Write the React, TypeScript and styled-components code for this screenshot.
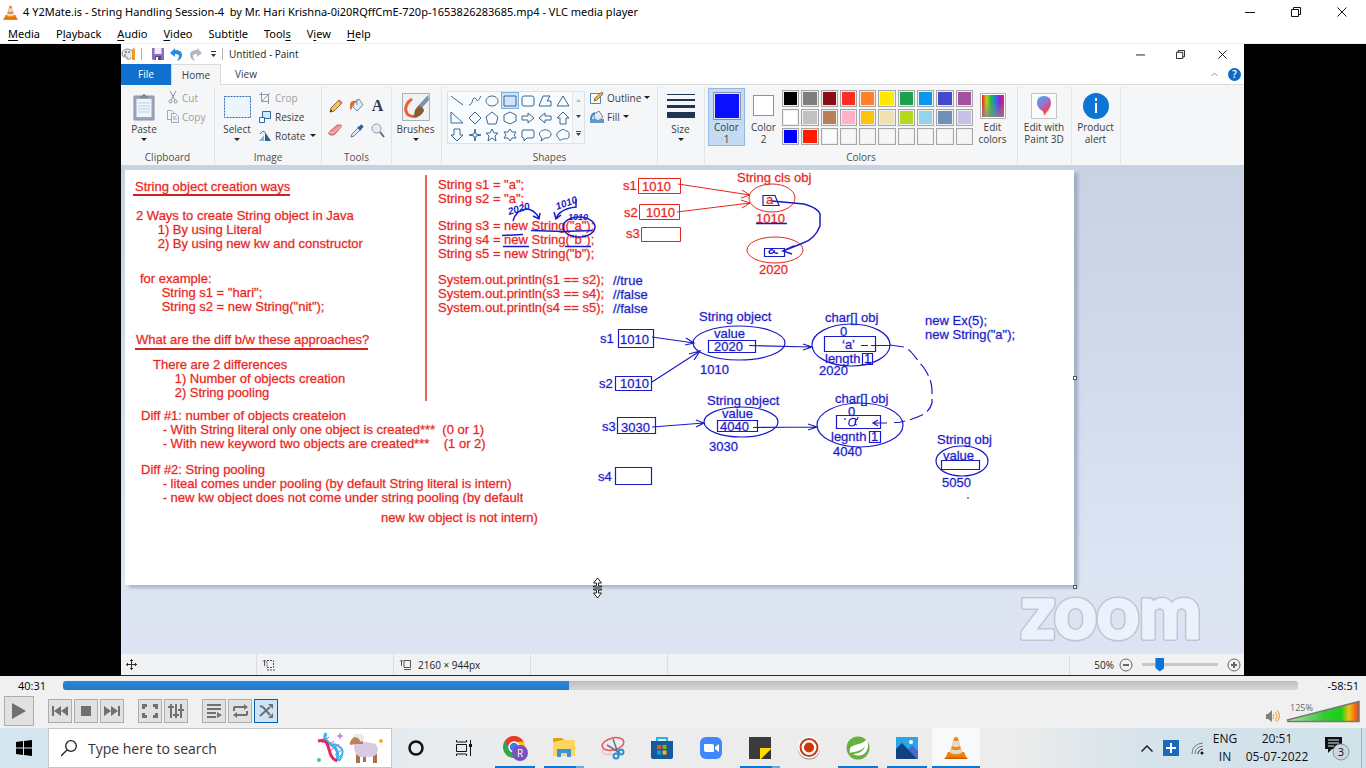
import React from "react";
import styled, { createGlobalStyle, css } from "styled-components";

const ui = '"Open Sans", "Noto Sans", sans-serif';
const RED = "#e8251c";
const BLUE = "#1a1ac8";

const GlobalStyle = createGlobalStyle`
  * { box-sizing: border-box; }
  body { margin: 0; font-family: ${ui}; background: #000; }
  button { font-family: inherit; padding: 0; margin: 0; border: 0; background: none; color: inherit; }
  svg { display: block; flex: none; }
`;

/* ---------- VLC window ---------- */

const Desktop = styled.div`
  display: flex;
  flex-direction: column;
  min-height: 100vh;
`;
const TitleBar = styled.header`
  display: flex;
  align-items: center;
  height: 24px;
  padding-left: 3px;
  background: #fff;
`;
const WindowTitle = styled.h1`
  flex: 1;
  margin: 0 0 0 5px;
  font: 400 11px/24px "Noto Sans", sans-serif;
  color: #000;
  white-space: pre;
`;
const WindowButton = styled.button<{ $w: number }>`
  display: flex;
  align-items: center;
  justify-content: center;
  width: ${(p) => p.$w}px;
  height: 20px;
`;
const MenuBar = styled.nav`
  display: flex;
  gap: 16px;
  height: 20px;
  padding-left: 8px;
  background: #fff;
  border-bottom: 1px solid #f0f0f0;
`;
const MenuButton = styled.button`
  font: 11px/20px "Noto Sans", sans-serif;
  color: #000;
  u { text-underline-offset: 2px; }
`;
const VideoArea = styled.main`
  flex: 1;
  display: grid;
  grid-template-columns: 121px minmax(0, 1fr) 122px;
  background: #000;
`;
const PlayerBar = styled.section`
  height: 52px;
  background: #f0f0f0;
  color: #000;
`;
const SeekRow = styled.div`
  display: flex;
  align-items: center;
  height: 19px;
  gap: 17px;
  padding: 0 7px 0 18px;
  font-size: 11px;
`;
const SeekSlider = styled.input<{ $done: number }>`
  appearance: none;
  flex: 1;
  min-width: 0;
  height: 9px;
  margin: 0 12px 0 0;
  border-radius: 3px;
  background: linear-gradient(#2a86d8, #2478c8) left / ${(p) => p.$done}% 100% no-repeat,
    linear-gradient(#bcbcbc, #d8d8d8);
  &::-webkit-slider-thumb { appearance: none; width: 1px; height: 1px; }
`;
const ControlRow = styled.div`
  display: flex;
  align-items: center;
  height: 32px;
  padding: 0 6px 0 4px;
`;
const ControlGroup = styled.div`
  display: flex;
  gap: 2px;
  margin-right: 14px;
`;
const ControlButton = styled.button<{ $big?: boolean; $on?: boolean }>`
  display: flex;
  align-items: center;
  justify-content: center;
  width: ${(p) => (p.$big ? 30 : 24)}px;
  height: ${(p) => (p.$big ? 30 : 24)}px;
  border: 1px solid ${(p) => (p.$on ? "#0a5ca8" : "#adadad")};
  background: ${(p) => (p.$on ? "#cce4f7" : "#e1e1e1")};
`;
const Volume = styled.div`
  display: flex;
  align-items: flex-end;
  margin-left: auto;
  gap: 6px;
`;

/* ---------- Paint window ---------- */

const Paint = styled.section`
  display: flex;
  flex-direction: column;
  min-width: 0;
  overflow: hidden;
  background: #fff;
  color: #3c3c3c;
  font-size: 10px;
  border-bottom: 1px solid #2b2a2c;
`;
const PaintTitle = styled.header`
  display: flex;
  align-items: center;
  height: 20px;
`;
const PaintName = styled.span`
  flex: 1;
  margin-left: 6px;
  font-size: 10px;
  color: #222;
`;
const Divider = styled.i`
  width: 1px;
  height: 12px;
  background: #b0b0b0;
`;
const QuickTools = styled.div`
  display: flex;
  align-items: center;
  padding-left: 6px;
`;
const QuickButton = styled.button<{ $w?: number }>`
  display: flex;
  align-items: center;
  justify-content: center;
  width: ${(p) => p.$w ?? 19}px;
`;
const TabRow = styled.div`
  display: flex;
  align-items: center;
  height: 21px;
  border-bottom: 1px solid #dcdcdc;
`;
const Tab = styled.button<{ $kind?: "file" | "active" }>`
  width: 50px;
  height: 21px;
  font-size: 10px;
  line-height: 20px;
  ${(p) => p.$kind === "file" && css`color: #fff; background: #1070d0;`}
  ${(p) => p.$kind === "active" && css`background: #f5f6f7; border: 1px solid #dcdcdc; border-bottom: 0;`}
`;
const TabTools = styled.div`
  display: flex;
  align-items: center;
  gap: 10px;
  margin-left: auto;
  padding-right: 3px;
`;
const HelpButton = styled.button`
  width: 13px;
  height: 13px;
  border-radius: 50%;
  background: #0b6bc7;
  color: #fff;
  font-size: 10px;
  line-height: 13px;
  font-weight: 600;
`;
const Ribbon = styled.div`
  display: flex;
  height: 80px;
  background: #f5f6f7;
`;
const Group = styled.section<{ $w: number }>`
  display: flex;
  flex-direction: column;
  justify-content: space-between;
  width: ${(p) => p.$w}px;
  margin: 2px 0 1px;
  padding-bottom: 0;
  border-right: 1px solid #e2e3e5;
`;
const GroupBody = styled.div<{ $gap?: number; $pad?: number }>`
  display: flex;
  gap: ${(p) => p.$gap ?? 0}px;
  padding-left: ${(p) => p.$pad ?? 0}px;
`;
const GroupName = styled.h2`
  margin: 0;
  font-size: 10px;
  line-height: 14px;
  font-weight: 400;
  text-align: center;
  color: #505050;
`;
const BigButton = styled.button<{ $w: number; $on?: boolean }>`
  display: flex;
  flex-direction: column;
  align-items: center;
  width: ${(p) => p.$w}px;
  height: 58px;
  margin-top: 1px;
  padding-top: 2px;
  font-size: 10px;
  line-height: 12px;
  border: 1px solid ${(p) => (p.$on ? "#8fb8e4" : "transparent")};
  background: ${(p) => (p.$on ? "#c5daf3" : "transparent")};
  white-space: pre;
`;
const IconBox = styled.span`
  display: flex;
  align-items: center;
  justify-content: center;
  height: 31px;
  margin-bottom: 1px;
`;
const Caret = styled.i`
  width: 0;
  margin: 3px 2px 0;
  border: 3px solid transparent;
  border-top: 3px solid #222;
  border-bottom: 0;
`;
const SmallStack = styled.div`
  display: flex;
  flex-direction: column;
  padding-top: 1px;
`;
const SmallButton = styled.button<{ $off?: boolean; $gap?: number }>`
  display: flex;
  align-items: center;
  gap: ${(p) => p.$gap ?? 3}px;
  height: 19px;
  font-size: 10px;
  color: ${(p) => (p.$off ? "#a0a0a0" : "#3c3c3c")};
  ${Caret} { margin: 0; }
`;
const ToolGrid = styled.div`
  display: grid;
  grid-template-columns: repeat(3, 21px);
  grid-auto-rows: 25px;
  padding: 6px 0 0 3px;
`;
const ToolButton = styled.button`
  display: flex;
  align-items: center;
  justify-content: center;
`;
const TextTool = styled(ToolButton)`
  font: 700 16px/16px "Liberation Serif", serif;
  color: #2e3a50;
`;
const Gallery = styled.div`
  display: flex;
  height: 53px;
  margin-top: 4px;
  border: 1px solid #dbe3ea;
  background: #f8fcff;
`;
const ShapeGrid = styled.div`
  display: grid;
  width: 124px;
  grid-template-columns: repeat(7, 1fr);
  grid-auto-rows: 17px;
`;
const ShapeButton = styled.button<{ $on?: boolean }>`
  display: flex;
  align-items: center;
  justify-content: center;
  border: 1px solid ${(p) => (p.$on ? "#7fb0e0" : "transparent")};
  background: ${(p) => (p.$on ? "#cfe4fa" : "transparent")};
`;
const GalleryScroll = styled.div`
  display: flex;
  flex-direction: column;
  align-items: center;
  justify-content: space-around;
  width: 12px;
  border-left: 1px solid #e2e6ea;
  background: #f5f6f7;
`;
const ColorWell = styled.i<{ $c: string; $big?: boolean }>`
  width: ${(p) => (p.$big ? 28 : 21)}px;
  height: ${(p) => (p.$big ? 28 : 21)}px;
  border: 1px solid #8f9398;
  outline: ${(p) => (p.$big ? "1px solid #dfe9f5" : "0")};
  outline-offset: -2px;
  background: ${(p) => p.$c};
`;
const Palette = styled.div`
  display: grid;
  width: 191px;
  grid-template-columns: repeat(10, 1fr);
  grid-auto-rows: 17px;
  gap: 2px;
  padding: 3px 0 0;
`;
const Swatch = styled.button<{ $c: string }>`
  border: 1px solid #a6a6a6;
  box-shadow: inset 0 0 0 1px #eee;
  background: ${(p) => p.$c};
`;
const Workspace = styled.div`
  position: relative;
  flex: 1;
  padding: 5px 0 0 4px;
  background: linear-gradient(#c8d2e2, #ccd6e8 20%, #dce5f3 85%, #dde3f2);
`;
const Canvas = styled.div`
  position: relative;
  width: 949px;
  height: 415px;
  background: #fff;
  box-shadow: 4px 3px 3px rgba(125, 142, 168, 0.55);
`;
const Note = styled.p<{ $x: number; $y: number; $blue?: boolean; $clip?: boolean }>`
  position: absolute;
  left: ${(p) => p.$x}px;
  top: ${(p) => p.$y}px;
  margin: 0;
  font: 13px/14px "Liberation Sans", Arial, sans-serif;
  color: ${(p) => (p.$blue ? BLUE : RED)};
  -webkit-text-stroke: 1px ${(p) => (p.$blue ? "rgba(26, 26, 200, 0.25)" : "rgba(232, 37, 28, 0.25)")};
  white-space: pre;
  ${(p) => p.$clip && css`height: 41px; overflow: hidden;`}
`;
const Sketch = styled.svg`
  position: absolute;
  left: 0;
  top: 0;
  font: 13px "Liberation Sans", Arial, sans-serif;
`;
const Handle = styled.i<{ $x: number; $y: number }>`
  position: absolute;
  left: ${(p) => p.$x}px;
  top: ${(p) => p.$y}px;
  width: 4px;
  height: 4px;
  border: 1px solid #4c5866;
  background: #fff;
`;
const Pointer = styled.svg`
  position: absolute;
  left: 471px;
  top: 412px;
`;
const Watermark = styled.svg`
  position: absolute;
  right: 40px;
  bottom: 6px;
`;
const StatusBar = styled.footer`
  display: flex;
  height: 22px;
  border-top: 1px solid #e3e5ea;
  background: #f1f2f4;
`;
const StatusCell = styled.div<{ $w?: number }>`
  display: flex;
  align-items: center;
  gap: 5px;
  ${(p) => (p.$w ? css`width: ${p.$w}px;` : css`flex: 1;`)}
  padding-left: 5px;
  border-right: 1px solid #dcdee2;
  font-size: 10px;
  color: #222;
`;
const ZoomCell = styled.div`
  display: flex;
  align-items: center;
  gap: 5px;
  padding: 0 3px 0 24px;
  font-size: 10px;
  color: #222;
`;
const RoundButton = styled.button`
  display: flex;
`;
const ZoomSlider = styled.input`
  appearance: none;
  width: 76px;
  height: 16px;
  margin: 0 4px;
  background: linear-gradient(#c8c8c8, #c8c8c8) center / 100% 3px no-repeat;
  &::-webkit-slider-thumb {
    appearance: none;
    width: 9px;
    height: 14px;
    background: #0b74d8;
    clip-path: polygon(0 0, 100% 0, 100% 75%, 50% 100%, 0 75%);
  }
`;

/* ---------- Taskbar ---------- */

const Taskbar = styled.footer`
  display: flex;
  height: 40px;
  color: #111;
  background: linear-gradient(90deg, #d3e5ee, #e6ebee 30%, #ececec 40%, #ececec 74%, #d6e3ea 84%, #d0e2ea);
`;
const TaskButton = styled.button<{ $bar?: "full" | "multi"; $active?: boolean; $gap?: number }>`
  position: relative;
  display: flex;
  align-items: center;
  justify-content: center;
  width: 48px;
  height: 40px;
  margin-left: ${(p) => p.$gap ?? 0}px;
  background: ${(p) => (p.$active ? "#f8f9fa" : "transparent")};
  &::after {
    content: "";
    position: absolute;
    bottom: 0;
    left: ${(p) => (p.$active ? 0 : 4)}px;
    right: ${(p) => (p.$active ? 0 : 4)}px;
    height: 2px;
    background: ${(p) =>
      p.$bar === "full" ? "#0b78d6" : p.$bar === "multi" ? "linear-gradient(90deg, #0b78d6 80%, #66abe4 80%)" : "none"};
  }
`;
const SearchBox = styled.label`
  display: flex;
  align-items: center;
  width: 344px;
  height: 40px;
  padding: 0 7px 0 12px;
  border: 1px solid #c3c7ca;
  background: #fff;
`;
const SearchInput = styled.input`
  flex: 1;
  min-width: 0;
  margin-left: 11px;
  padding: 0;
  border: 0;
  outline: 0;
  font: 14px ${ui};
  color: #333;
  background: none;
  &::placeholder { color: #333; opacity: 1; }
`;
const Tray = styled.div`
  display: flex;
  align-items: center;
  margin-left: auto;
  padding-right: 4px;
`;
const TrayButton = styled.button<{ $w: number }>`
  display: flex;
  align-items: center;
  justify-content: center;
  width: ${(p) => p.$w}px;
  height: 40px;
  font-size: 12px;
  line-height: 18px;
  text-align: center;
`;
const TrayEdge = styled.i`
  width: 1px;
  height: 40px;
  background: #a8b6be;
`;

/* ---------- Icons ---------- */

const Cone = ({ size }: { size: number }) => (
  <svg width={size} height={size} viewBox="0 0 24 24">
    <path d="M4 16h16l3 7H1z" fill="#f07c00" />
    <path d="M1 21.500h22l.5 1.500H.5z" fill="#c85a00" />
    <path d="M10.300 1.500q1.700-1 3.400 0L18.500 18q-6.500 3.500-13 0z" fill="#f58a0b" />
    <path d="M9.300 5h5.400l1.400 5q-4 2-8.200 0zM7 13q5 2.500 10 0l1 3.500q-6 3-12 0z" fill="#dcdcdc" />
  </svg>
);

const WinGlyph = ({ kind, s = 10 }: { kind: "min" | "max" | "close"; s?: number }) => (
  <svg width={s} height={s} viewBox="0 0 10 10" fill="none" stroke="#111">
    {kind === "min" && <path d="M0 5.500h10" />}
    {kind === "max" && <path d="M.5 2.500h7v7h-7zM2.500 2.500v-2h7v7h-2" />}
    {kind === "close" && <path d="M.5.5l9 9M9.500.5l-9 9" />}
  </svg>
);

const shapes: string[] = [
  "M1 2l12 9",
  "M1 11C5 11 4 3 7 4S8 11 13 2",
  "M7 2a6 5 0 1 0 .1 0z",
  "M1 2h12v10H1z",
  "M3 2h8q2 0 2 2v6q0 2-2 2H3q-2 0-2-2V4q0-2 2-2z",
  "M1 12L5 2h7L9 7h4v5z",
  "M7 2l6 10H1z",
  "M1 1v11h12z",
  "M7 1l6 6-6 6-6-6z",
  "M7 1l6 5-2 7H3L1 6z",
  "M7 1l6 3v6l-6 3-6-3V4z",
  "M1 5h6V2l6 5-6 5V9H1z",
  "M13 5H7V2L1 7l6 5V9h6z",
  "M7 1l6 6h-3v6H4V7H1z",
  "M7 13L1 7h3V1h6v6h3z",
  "M7 1l1 5 5 1-5 1-1 5-1-5-5-1 5-1z",
  "M7 1l2 4h4l-3 3 1 5-4-3-4 3 1-5-3-3h4z",
  "M7 1l2 3h4l-2 3 2 3H9l-2 3-2-3H1l2-3-2-3h4z",
  "M2 2h10l1 1v6l-1 1H6l-3 3v-3H2L1 9V3z",
  "M4 10C-3 4 6 1 9 2c7 2 4 9-2 8l-4 3z",
  "M3 10C-1 8 1 4 4 3c3-3 5-1 6 0 4 0 3 4 3 6-1 3-4 1-6 2-2 2-5 1-4-1z",
];

const palette = [
  "#000", "#7f7f7f", "#880f15", "#fb2d24", "#ff8326", "#ffe900", "#1ba050", "#0798ee", "#4549cd", "#a6519f",
  "#fff", "#c1c1c1", "#bb7c58", "#ffb0ca", "#ffc20d", "#efe2ac", "#b6d81c", "#93d4e8", "#7090b8", "#c9c1e3",
  "#00f", "#ff1a00", "#fbfcfd", "#f6f6f6", "#f6f6f6", "#f6f6f6", "#f6f6f6", "#f6f6f6", "#f6f6f6", "#f6f6f6",
];

const Pencil = () => (
  <svg width="14" height="14" viewBox="0 0 14 14">
    <path d="M1 13l1-4 8-8 3 3-8 8z" fill="#f3c35c" stroke="#8a6d3b" />
    <path d="M9 2l3 3 1.500-1.500-3-3z" fill="#d07060" />
    <path d="M1 13l.6-2.500L3.500 12z" fill="#333" />
  </svg>
);
const Bucket = () => (
  <svg width="15" height="15" viewBox="0 0 15 15">
    <path d="M5 5l5-4 4 6-6 6-4-4z" fill="#e2eef6" stroke="#6f8fa8" />
    <path d="M8 7V1" stroke="#6f8fa8" />
    <path d="M8 3C4 2 1 3 1 7v5c2 0 2-3 3-5z" fill="#df6b2f" />
  </svg>
);
const Eraser = () => (
  <svg width="15" height="13" viewBox="0 0 15 13">
    <path d="M1 8l7-6q1-1 2-1h3q1 1 0 2L7 10q-1 1-2 1H2q-2-1-1-3z" fill="#ee8f93" stroke="#c9686e" />
    <path d="M1 8l4 .5L13 2" fill="none" stroke="#f9c4c4" />
  </svg>
);
const Dropper = () => (
  <svg width="14" height="14" viewBox="0 0 14 14">
    <path d="M1 13l1-3 6-6 2 2-6 6z" fill="#dfe9f2" stroke="#6c7f94" />
    <path d="M7 3l2-.5 2-2q2 0 2.500 2.500l-2 2-.5 2z" fill="#2b5f9e" />
  </svg>
);
const Magnifier = () => (
  <svg width="14" height="15" viewBox="0 0 14 15" fill="none">
    <circle cx="5.500" cy="5.500" r="4.500" fill="#e3edf5" stroke="#8d99a5" />
    <path d="M9 9l4 5" stroke="#7a6458" strokeWidth="2" />
  </svg>
);

/* ---------- Paint canvas drawing ---------- */

type Mark = [number, number, string];
const redMarks: Mark[] = [
  [623, 190, "s1"], [642, 191, "1010"], [624, 217, "s2"], [646, 217, "1010"], [626, 238, "s3"],
  [737, 182, "String cls obj"], [766, 204, "a"], [756, 223, "1010"], [759, 274, "2020"],
];
const blueMarks: Mark[] = [
  [600, 343, "s1"], [620, 344, "1010"], [599, 388, "s2"], [620, 388, "1010"], [602, 431, "s3"], [621, 432, "3030"],
  [598, 481, "s4"], [699, 321, "String object"], [714, 338, "value"], [714, 351, "2020"], [700, 374, "1010"],
  [825, 322, "char[] obj"], [840, 336, "0"], [842, 349, "‘a’"], [825, 363, "length"], [864, 363, "1"],
  [819, 375, "2020"], [707, 405, "String object"], [722, 418, "value"], [720, 431, "4040"], [709, 451, "3030"],
  [835, 403, "char[] obj"], [848, 416, "0"], [831, 441, "legnth"], [871, 441, "1"], [833, 456, "4040"],
  [937, 444, "String obj"], [943, 460, "value"], [942, 487, "5050"],
];

const Drawing = () => (
  <Sketch width="949" height="415" viewBox="125 170 949 415" fill="none">
    <g stroke={RED}>
      <path d="M426 175v226" stroke="#ec625b" strokeWidth="2" />
      <path d="M133 195h157M135 349h233" strokeWidth="2" stroke="#d0231c" />
      <path d="M638.500 178.500h42v15h-42zM639.500 204.500h40v15h-40zM641.500 227.500h39v14h-39z" />
      <path d="M678 184l72 11m-8-5l8 5-9 3M677 212l73-9m-9-3l9 3-8 5" />
      <ellipse cx="772" cy="198" rx="23" ry="14" />
      <ellipse cx="775" cy="250" rx="28" ry="13" />
    </g>
    <g fill={RED} stroke={RED} strokeOpacity="0.25">
      {redMarks.map(([x, y, t], i) => <text key={i} x={x} y={y}>{t}</text>)}
    </g>
    <g stroke={BLUE}>
      <path d="M763 195.500h12l4 10h-16zM764.500 248.500h20v8h-20z" strokeWidth="1.200" />
      <path d="M772 201l32 3q14 4 16 10v12q-5 13-17 17l-20 8m11-5l-11 5 9 3" strokeWidth="1.500" />
      <path d="M756 223.500h31M531 230.500l32 1 29-1M502 235.500l21-1M503 246.500h26M565 246.500h26" strokeWidth="1.500" />
      <ellipse cx="579" cy="227" rx="16" ry="10" strokeWidth="1.500" />
      <path d="M513 221q3-11 13-12 8 0 13 9m-6-2l6 3 1-6M576 199v8q-17 2-20 12m-2-7l2 7 5-4" strokeWidth="1.500" />
      <path d="M773 250q-3-1-4 2 1 3 5 0v-2q0 4 4 3" strokeWidth="1.500" />
      <g strokeWidth="1.200">
        <path d="M618.500 329.500h35v18h-35zM615.500 376.500h36v14h-36zM617.500 417.500h38v16h-38zM615.500 467.500h36v17h-36z" />
        <path d="M652 337l42 6m-8-5l8 5-9 2M652 382l48-31m-11 3l11-3-6 9M652 427l52-4m-8-3l8 3-8 4" />
        <path d="M749 345.500l63 1.500m-9-3l9 3-9 3M753 427.500l64-.5m-9-3l9 3-9 3" />
        <ellipse cx="739" cy="343" rx="46" ry="17" />
        <ellipse cx="851" cy="345" rx="39" ry="21" />
        <ellipse cx="741" cy="422" rx="37" ry="15" />
        <ellipse cx="860" cy="425" rx="43" ry="22" />
        <ellipse cx="962" cy="461" rx="26" ry="15" />
        <path d="M708.500 340.500h47v12h-47zM824.500 336.500h51v15h-51zM862.500 353.500h10v11h-10zM717.500 420.500h40v11h-40zM836.500 415.500h44v13h-44zM869.500 431.500h11v11h-11zM941.500 460.500h38v9h-38z" />
        <path d="M861 345.500h7M871 345.500h19" />
        <path d="M890 345l14 2q5 2 8 6l12 15q8 12 8 22v13q-2 8-10 12-10 5-22 7" strokeDasharray="14 5" />
        <path d="M900 422.500h-6M887 423h-14m5-3l-5 3 5 3" />
        <path d="M845 418v2M856 419q-6-2-7 3-1 4 3 4t4-7q-2 6 1 6M858 417l-1 3" />
        <path d="M967 498h2" />
      </g>
    </g>
    <g fill={BLUE}>
      <g stroke={BLUE} strokeOpacity="0.25">
        {blueMarks.map(([x, y, t], i) => <text key={i} x={x} y={y}>{t}</text>)}
      </g>
      <g fontSize="10" fontWeight="700" fontStyle="italic">
        <text transform="translate(509 215) rotate(-16)">2020</text>
        <text transform="translate(557 210) rotate(-20)">1010</text>
        <text x="568" y="220" fontSize="9">1010</text>
      </g>
    </g>
  </Sketch>
);

const notes: { x: number; y: number; text: string; blue?: boolean; clip?: boolean }[] = [
  { x: 10, y: 10, text: "String object creation ways" },
  { x: 11, y: 39, text: "2 Ways to create String object in Java\n      1) By using Literal\n      2) By using new kw and constructor" },
  { x: 15, y: 102, text: "for example:\n      String s1 = \"hari\";\n      String s2 = new String(\"nit\");" },
  { x: 11, y: 163, text: "What are the diff b/w these approaches?" },
  { x: 28, y: 188, text: "There are 2 differences\n      1) Number of objects creation\n      2) String pooling" },
  { x: 16, y: 239, text: "Diff #1: number of objects createion\n      - With String literal only one object is created***  (0 or 1)\n      - With new keyword two objects are created***    (1 or 2)" },
  { x: 16, y: 293, clip: true, text: "Diff #2: String pooling\n      - liteal comes under pooling (by default String literal is intern)\n      - new kw object does not come under string pooling (by default" },
  { x: 256, y: 341, text: "new kw object is not intern)" },
  { x: 313, y: 8, text: "String s1 = \"a\";\nString s2 = \"a\";" },
  { x: 313, y: 49, text: "String s3 = new String(\"a\");\nString s4 = new String(\"b\");\nString s5 = new String(\"b\");" },
  { x: 313, y: 103, text: "System.out.println(s1 == s2);\nSystem.out.println(s3 == s4);\nSystem.out.println(s4 == s5);" },
  { x: 488, y: 104, blue: true, text: "//true\n//false\n//false" },
  { x: 800, y: 144, blue: true, text: "new Ex(5);\nnew String(\"a\");" },
];

const PaintWindow = () => (
  <Paint>
    <PaintTitle>
      <svg width="20" height="16" viewBox="0 0 20 16">
        <path d="M1 8q0-5 6-5 6 1 5 6-1 5-6 4 1-3-2-2-3 0-3-3z" fill="#e8e8e8" stroke="#8f8f8f" />
        <circle cx="5" cy="6" r="1" fill="#d44" /><circle cx="8" cy="6" r="1" fill="#48c" /><circle cx="4" cy="9" r="1" fill="#5a5" />
        <path d="M11 14V4l2-3 1 3v10z" fill="#f09a2a" />
      </svg>
      <Divider />
      <QuickTools>
        <QuickButton aria-label="Save">
          <svg width="12" height="12" viewBox="0 0 12 12"><path d="M0 0h12v12H1L0 11z" fill="#8a6fc0" /><path d="M2.500 0h7v6h-7z" fill="#eee8f8" /><path d="M3 8h6v4H3z" fill="#574a78" /><path d="M4 9h2v3H4z" fill="#fff" /></svg>
        </QuickButton>
        <QuickButton aria-label="Undo">
          <svg width="13" height="13" viewBox="0 0 13 13"><path d="M5 0v2q7 0 7 5 0 4-5 6 2-3 2-5 0-2-4-2v3L0 5z" fill="#2c8ae0" /></svg>
        </QuickButton>
        <QuickButton aria-label="Redo">
          <svg width="13" height="13" viewBox="0 0 13 13"><path d="M8 0v2Q1 2 1 7q0 4 5 6-2-3-2-5 0-2 4-2v3l5-4z" fill="#b3b9c1" /></svg>
        </QuickButton>
        <QuickButton $w={17} aria-label="Customize toolbar">
          <svg width="7" height="6" viewBox="0 0 7 6"><path d="M1 0h5v1H1zM1 3h5L3.500 6z" fill="#333" /></svg>
        </QuickButton>
      </QuickTools>
      <Divider />
      <PaintName>Untitled - Paint</PaintName>
      <WindowButton $w={39} aria-label="Minimize"><WinGlyph kind="min" s={9} /></WindowButton>
      <WindowButton $w={41} aria-label="Restore"><WinGlyph kind="max" s={9} /></WindowButton>
      <WindowButton $w={43} aria-label="Close"><WinGlyph kind="close" s={9} /></WindowButton>
    </PaintTitle>
    <TabRow>
      <Tab $kind="file">File</Tab>
      <Tab $kind="active">Home</Tab>
      <Tab>View</Tab>
      <TabTools>
        <svg width="7" height="5" viewBox="0 0 7 5" fill="none" stroke="#999"><path d="M.5 4l3-3 3 3" /></svg>
        <HelpButton aria-label="Help">?</HelpButton>
      </TabTools>
    </TabRow>
    <Ribbon>
      <Group $w={94}>
        <GroupBody>
          <BigButton $w={46}>
            <IconBox>
              <svg width="24" height="28" viewBox="0 0 24 28"><path d="M2 3h20v24H2z" fill="#9aa8ba" stroke="#8593a6" /><path d="M4.500 6h15v18h-15z" fill="#eef4fa" /><path d="M6 10h12M6 13h12M6 16h12M6 19h12" stroke="#c2d3e2" /><path d="M8 5V3h2q2-4 4 0h2v2z" fill="#7d8793" /></svg>
            </IconBox>
            Paste<Caret />
          </BigButton>
          <SmallStack>
            <SmallButton $off>
              <svg width="12" height="13" viewBox="0 0 12 13" fill="none" stroke="#8893a0"><path d="M3 0l5 9M9 0L4 9" /><circle cx="3.500" cy="10.500" r="1.500" /><circle cx="8.500" cy="10.500" r="1.500" /></svg>Cut
            </SmallButton>
            <SmallButton $off>
              <svg width="12" height="13" viewBox="0 0 12 13" fill="#f3f6f9" stroke="#9aa7b8"><path d="M.5.5h4l2 2v7h-6z" /><path d="M4.500 3.500h4l3 3v6h-7zM6 7h3M6 9h4" /></svg>Copy
            </SmallButton>
          </SmallStack>
        </GroupBody>
        <GroupName>Clipboard</GroupName>
      </Group>
      <Group $w={107}>
        <GroupBody>
          <BigButton $w={44}>
            <IconBox>
              <svg width="27" height="22" viewBox="0 0 27 22"><path d="M.5.5h26v21H.5z" fill="#edf5fc" stroke="#2f68a8" strokeDasharray="2 1" /></svg>
            </IconBox>
            Select<Caret />
          </BigButton>
          <SmallStack>
            <SmallButton $off $gap={4}>
              <svg width="12" height="12" viewBox="0 0 12 12" fill="none" stroke="#8f99a6"><path d="M2.500 0v9.500H10M0 2.500h9.500V12M3 9l8-8" /></svg>Crop
            </SmallButton>
            <SmallButton $gap={4}>
              <svg width="12" height="12" viewBox="0 0 12 12"><path d="M3.500.5h8v7h-8z" fill="#d5e8f8" stroke="#2f68a8" /><path d="M.5 6.500h5v5h-5z" fill="#fff" stroke="#2f68a8" /></svg>Resize
            </SmallButton>
            <SmallButton $gap={4}>
              <svg width="12" height="12" viewBox="0 0 12 12"><path d="M0 11l5-6v6z" fill="#8ab3d8" /><path d="M6 2l6 9H6z" fill="#285f9a" /><path d="M1 4q2-4 5-2" fill="none" stroke="#2f68a8" /></svg>Rotate<Caret />
            </SmallButton>
          </SmallStack>
        </GroupBody>
        <GroupName>Image</GroupName>
      </Group>
      <Group $w={70}>
        <ToolGrid>
          <ToolButton aria-label="Pencil"><Pencil /></ToolButton>
          <ToolButton aria-label="Fill with color"><Bucket /></ToolButton>
          <TextTool>A</TextTool>
          <ToolButton aria-label="Eraser"><Eraser /></ToolButton>
          <ToolButton aria-label="Color picker"><Dropper /></ToolButton>
          <ToolButton aria-label="Magnifier"><Magnifier /></ToolButton>
        </ToolGrid>
        <GroupName>Tools</GroupName>
      </Group>
      <Group $w={50}>
        <BigButton $w={47}>
          <IconBox>
            <svg width="28" height="28" viewBox="0 0 28 28"><path d="M.5.500h27v27H.5z" fill="#eef2f6" stroke="#a9b0b8" /><path d="M10 6C0 12 2 26 15 23" fill="none" stroke="#e8622c" strokeWidth="3" /><path d="M26 2l1 5-8 9-4-2z" fill="#7d92a8" /><path d="M17 13q5 1 5 5-4 7-10 6 0-9 5-11z" fill="#8a5a34" /></svg>
          </IconBox>
          Brushes<Caret />
        </BigButton>
      </Group>
      <Group $w={216}>
        <GroupBody $pad={5} $gap={5}>
          <Gallery>
            <ShapeGrid>
              {shapes.map((d, i) => (
                <ShapeButton key={i} $on={i === 3} aria-label={`Shape ${i + 1}`}>
                  <svg width="14" height="14" viewBox="0 0 14 14" fill="none" stroke="#3a6892"><path d={d} /></svg>
                </ShapeButton>
              ))}
            </ShapeGrid>
            <GalleryScroll>
              <svg width="5" height="3"><path d="M0 3h5L2.500 0z" fill="#bbb" /></svg>
              <svg width="5" height="3"><path d="M0 0h5L2.500 3z" fill="#444" /></svg>
              <svg width="5" height="5"><path d="M0 0h5v1H0zM0 2h5L2.500 5z" fill="#444" /></svg>
            </GalleryScroll>
          </Gallery>
          <SmallStack>
            <SmallButton>
              <svg width="14" height="13" viewBox="0 0 14 13"><path d="M.5 2.500h10v10H.5z" fill="#fff" stroke="#4a86c0" /><path d="M4 10l1-3 7-6 1 2-6 6z" fill="#f0b850" stroke="#907040" /></svg>Outline<Caret />
            </SmallButton>
            <SmallButton>
              <svg width="14" height="13" viewBox="0 0 14 13"><path d="M0 9h14v4H0z" fill="#5b9bd5" /><path d="M4 4l5-3 4 6-5 4-4-3z" fill="#dfe9f2" stroke="#7088a0" /><path d="M5 3Q1 4 1 10" fill="none" stroke="#4a86c0" strokeWidth="2" /></svg>Fill<Caret />
            </SmallButton>
          </SmallStack>
        </GroupBody>
        <GroupName>Shapes</GroupName>
      </Group>
      <Group $w={47}>
        <BigButton $w={45}>
          <IconBox>
            <svg width="28" height="25" viewBox="0 0 28 25" fill="#1f3553"><path d="M0 0h28v1H0zM0 5h28v2H0zM0 11h28v3H0zM0 18h28v6H0z" /></svg>
          </IconBox>
          Size<Caret />
        </BigButton>
      </Group>
      <Group $w={313}>
        <GroupBody $pad={3}>
          <BigButton $w={37} $on><IconBox><ColorWell $c="#0a10ff" $big /></IconBox>{"Color\n1"}</BigButton>
          <BigButton $w={37}><IconBox><ColorWell $c="#fff" /></IconBox>{"Color\n2"}</BigButton>
          <Palette>
            {palette.map((c, i) => <Swatch key={i} $c={c} aria-label={`Color ${c}`} />)}
          </Palette>
          <BigButton $w={39}>
            <IconBox>
              <svg width="26" height="26" viewBox="0 0 26 26">
                <defs>
                  <linearGradient id="hue"><stop offset="0" stopColor="#e02020" /><stop offset=".2" stopColor="#c8c820" /><stop offset=".4" stopColor="#20c040" /><stop offset=".6" stopColor="#2080e0" /><stop offset=".8" stopColor="#9020d0" /><stop offset="1" stopColor="#e02060" /></linearGradient>
                  <linearGradient id="dim" x2="0" y2="1"><stop offset=".3" stopColor="#888" stopOpacity="0" /><stop offset="1" stopColor="#888" stopOpacity=".8" /></linearGradient>
                </defs>
                <path d="M.5.500h25v25H.5z" fill="#fff" stroke="#b0b0b0" /><path d="M2 2h22v22H2z" fill="url(#hue)" /><path d="M2 2h22v22H2z" fill="url(#dim)" />
              </svg>
            </IconBox>
            {"Edit\ncolors"}
          </BigButton>
        </GroupBody>
        <GroupName>Colors</GroupName>
      </Group>
      <Group $w={54}>
        <BigButton $w={52}>
          <IconBox>
            <svg width="26" height="26" viewBox="0 0 26 26">
              <defs><linearGradient id="drop" x2=".6" y2="1"><stop offset="0" stopColor="#30b8e8" /><stop offset=".5" stopColor="#9a6fd8" /><stop offset=".8" stopColor="#e84860" /><stop offset="1" stopColor="#f0a020" /></linearGradient></defs>
              <path d="M.5.500h25v25H.5z" fill="#fcfcfc" stroke="#c4c4c4" /><path d="M13 3q7 0 7 7 0 5-7 13 0-5-3-6-4-3-4-7 0-7 7-7z" fill="url(#drop)" />
            </svg>
          </IconBox>
          {"Edit with\nPaint 3D"}
        </BigButton>
      </Group>
      <Group $w={49}>
        <BigButton $w={47}>
          <IconBox>
            <svg width="26" height="26" viewBox="0 0 26 26"><circle cx="13" cy="13" r="13" fill="#0b74d4" /><path d="M12 10h2v10h-2zM12 5h2v3h-2z" fill="#fff" /></svg>
          </IconBox>
          {"Product\nalert"}
        </BigButton>
      </Group>
    </Ribbon>
    <Workspace>
      <Canvas>
        {notes.map((n, i) => <Note key={i} $x={n.x} $y={n.y} $blue={n.blue} $clip={n.clip}>{n.text}</Note>)}
        <Drawing />
        <Handle $x={948} $y={206} />
        <Handle $x={948} $y={415} />
      </Canvas>
      <Pointer width="11" height="22" viewBox="0 0 11 22">
        <path d="M5.500 1l4 5h-3v3h3v1h-8V9h3V6h-3zM5.500 21l4-5h-3v-3h3v-1h-8v1h3v3h-3z" fill="#fff" stroke="#222" />
      </Pointer>
      <Watermark width="186" height="56" viewBox="0 0 186 56" role="img" aria-label="zoom">
        <g fontFamily="Lato, sans-serif" fontSize="74" fontWeight="700" strokeLinejoin="round">
          <text x="3" y="47" fill="#bfc6d3" stroke="#bfc6d3" strokeWidth="6">zoom</text>
          <text x="3" y="47" fill="#edf1fb" stroke="#edf1fb" strokeWidth="3" aria-hidden="true">zoom</text>
        </g>
      </Watermark>
    </Workspace>
    <StatusBar>
      <StatusCell $w={136}>
        <svg width="11" height="11" viewBox="0 0 11 11" fill="none" stroke="#333"><path d="M5.500 0v11M0 5.500h11M4 1.500h3M4 9.500h3M1.500 4v3M9.500 4v3" /></svg>
      </StatusCell>
      <StatusCell $w={137}>
        <svg width="14" height="12" viewBox="0 0 14 12" fill="none" stroke="#555"><path d="M2.500 1v6M1 2.500L2.500 1 4 2.500" /><path d="M5 1.500h6.500v7H5zM5 11h8" strokeDasharray="2 1" /></svg>
      </StatusCell>
      <StatusCell $w={137}>
        <svg width="14" height="12" viewBox="0 0 14 12" fill="none" stroke="#555"><path d="M2.500 1v6M1 2.500L2.500 1 4 2.500M5 1.500h6.500v7H5zM5 10.500h7" /></svg>
        2160 × 944px
      </StatusCell>
      <StatusCell $w={137} />
      <StatusCell />
      <ZoomCell>
        <span>50%</span>
        <RoundButton aria-label="Zoom out"><svg width="14" height="14" viewBox="0 0 14 14" fill="none" stroke="#666"><circle cx="7" cy="7" r="6" /><path d="M4 7h6" strokeWidth="2" /></svg></RoundButton>
        <ZoomSlider type="range" aria-label="Zoom" min="0" max="100" defaultValue="20" />
        <RoundButton aria-label="Zoom in"><svg width="14" height="14" viewBox="0 0 14 14" fill="none" stroke="#666"><circle cx="7" cy="7" r="6" /><path d="M4 7h6M7 4v6" strokeWidth="2" /></svg></RoundButton>
      </ZoomCell>
    </StatusBar>
  </Paint>
);

const G = "#707070";

const Player = () => (
  <PlayerBar>
    <SeekRow>
      <time>40:31</time>
      <SeekSlider type="range" aria-label="Position" $done={41} min="0" max="100" defaultValue="41" />
      <time>-58:51</time>
    </SeekRow>
    <ControlRow>
      <ControlGroup>
        <ControlButton $big aria-label="Play"><svg width="14" height="16"><path d="M0 0l14 8-14 8z" fill={G} /></svg></ControlButton>
      </ControlGroup>
      <ControlGroup>
        <ControlButton aria-label="Previous"><svg width="16" height="10" fill={G}><path d="M0 0h2v10H0zM9 0v10L2 5zM16 0v10L9 5z" /></svg></ControlButton>
        <ControlButton aria-label="Stop"><svg width="10" height="10"><path d="M0 0h10v10H0z" fill={G} /></svg></ControlButton>
        <ControlButton aria-label="Next"><svg width="16" height="10" fill={G}><path d="M14 0h2v10h-2zM0 0v10l7-5zM7 0v10l7-5z" /></svg></ControlButton>
      </ControlGroup>
      <ControlGroup>
        <ControlButton aria-label="Fullscreen"><svg width="16" height="14" fill="none" stroke={G} strokeWidth="3"><path d="M1.500 5V1.500H5M11 1.500h3.500V5M14.500 9v3.500H11M5 12.500H1.500V9" /></svg></ControlButton>
        <ControlButton aria-label="Extended settings"><svg width="16" height="14" fill="none" stroke={G} strokeWidth="2"><path d="M3 0v14M8 0v14M13 0v14M0 3h6M5 11h6M10 6h6" /></svg></ControlButton>
      </ControlGroup>
      <ControlGroup>
        <ControlButton aria-label="Playlist"><svg width="15" height="14" fill={G}><path d="M0 0h14v2H0zM0 4h14v2H0zM0 8h9v2H0zM0 12h9v2H0zM10 8l5 3-5 3z" /></svg></ControlButton>
        <ControlButton aria-label="Loop"><svg width="15" height="14" viewBox="0 0 15 14" fill="none" stroke={G} strokeWidth="2"><path d="M1 7V4q0-1 1-1h9M14 7v3q0 1-1 1H4" /><path d="M11 0l4 3-4 3zM4 8l-4 3 4 3z" fill={G} stroke="none" /></svg></ControlButton>
        <ControlButton $on aria-label="Random"><svg width="14" height="14" viewBox="0 0 14 14" fill="none" stroke={G} strokeWidth="2"><path d="M1 2l3 1 7 8M1 12L11 3" /><path d="M9 0h5v5zM9 14h5V9z" fill={G} stroke="none" /></svg></ControlButton>
      </ControlGroup>
      <Volume>
        <svg width="14" height="13" viewBox="0 0 14 13"><path d="M0 4h2l4-4v12L2 9H0z" fill="#808080" /><path d="M7 4q2 2 0 5M9 2q4 4 0 9M11 0q5 6 0 12" fill="none" stroke="#f59a22" /></svg>
        <svg width="74" height="23" viewBox="0 0 74 23" role="img" aria-label="Volume 125%">
          <defs><linearGradient id="vol"><stop offset="0" stopColor="#b8e0b0" /><stop offset=".5" stopColor="#38c838" /><stop offset=".75" stopColor="#18d018" /><stop offset=".86" stopColor="#f5c010" /><stop offset="1" stopColor="#f03818" /></linearGradient></defs>
          <path d="M1.500 20L73 1.500V21.500H2z" fill="url(#vol)" stroke="#777" strokeWidth="1.500" />
          <text x="4" y="11" fontSize="9" fill="#666">125%</text>
        </svg>
      </Volume>
    </ControlRow>
  </PlayerBar>
);

const Bottom = () => (
  <Taskbar>
    <TaskButton aria-label="Start"><svg width="16" height="16" viewBox="0 0 16 16"><path d="M0 2l7-1v6.500H0zM8 1l8-1v7.500H8zM0 8.500h7V15l-7-1zM8 8.500h8V16l-8-1z" /></svg></TaskButton>
    <SearchBox>
      <svg width="16" height="17" viewBox="0 0 16 17" fill="none" stroke="#222" strokeWidth="1.300"><circle cx="10" cy="6" r="5.300" /><path d="M6 10l-6 6" /></svg>
      <SearchInput type="text" placeholder="Type here to search" aria-label="Search" />
      <svg width="68" height="32" viewBox="0 0 68 32">
        <path d="M5 8l5-3M6 11l7-6M12 14l6-5M14 19l9-7M19 23l8-6M22 26l5-5" stroke="#e0558c" strokeWidth="1" />
        <path d="M10 1C4 14 26 9 21 29" fill="none" stroke="#39b4ee" strokeWidth="3" />
        <path d="M2 9C17 5 9 25 21 29" fill="none" stroke="#e8245e" strokeWidth="3" />
        <path d="M17 12C28 15 29 20 23 29" fill="none" stroke="#39b4ee" strokeWidth="2" />
        <path d="M24 0l1 3 3 1-3 1-1 3-1-3-3-1 3-1z" fill="#c77bf0" />
        <circle cx="3" cy="28" r="2" fill="#4dc96c" /><circle cx="65" cy="9" r="2" fill="#f5b01a" />
        <path d="M40 22h4v9h-4zM47 23h3v7h-3zM57 22h4v9h-4z" fill="#a9714b" />
        <path d="M38 11q3-3 7 0 5-2 9 0 7-1 8 6 0 7-8 8H44q-7-3-6-14z" fill="#d9c9e2" />
        <path d="M38 5q5-4 9 1v6h-7l-6 1q-1-4 4-8z" fill="#b98558" />
        <path d="M37 5q0-4 5-3 5-1 6 4-1 5-4 3-1-4-7-4z" fill="#efe8e4" />
      </svg>
    </SearchBox>
    <TaskButton aria-label="Cortana"><svg width="16" height="16"><circle cx="8" cy="8" r="6.500" fill="none" stroke="#111" strokeWidth="2.500" /></svg></TaskButton>
    <TaskButton aria-label="Task view"><svg width="16" height="16" fill="none" stroke="#111"><path d="M.5 4.500h10v7H.5zM.5 0v2h10V0M.5 16v-2h10v2M14.500 0v16" /><path d="M13 4h3v3h-3z" fill="#111" stroke="none" /></svg></TaskButton>
    <TaskButton $bar="full" $gap={3} aria-label="Chrome">
      <svg width="26" height="26" viewBox="0 0 26 26">
        <circle cx="12" cy="12" r="11" fill="#fbc116" /><path d="M2.500 6.500A11 11 0 0 1 21.500 6.500L12 7l-5 7z" fill="#e33b2e" /><path d="M2.500 6.500A11 11 0 0 0 12 23l4-8-8-1z" fill="#2da94f" />
        <circle cx="12" cy="12" r="5" fill="#3b7ded" stroke="#fff" strokeWidth="1.500" /><circle cx="18" cy="18" r="8" fill="#7a52bb" />
        <text x="18" y="22" fontSize="10" fill="#fff" textAnchor="middle">R</text>
      </svg>
    </TaskButton>
    <TaskButton $bar="multi" $gap={1} aria-label="File Explorer">
      <svg width="22" height="20" viewBox="0 0 22 20"><path d="M0 1q0-1 1-1h8l2 2v3H0z" fill="#e0a010" /><path d="M0 4l10-2h11q1 0 1 1v15H0z" fill="#ffd562" /><path d="M4 11h14v8h-4v-4H8v4H4z" fill="#3b92d8" /></svg>
    </TaskButton>
    <TaskButton $gap={1} aria-label="Snipping Tool">
      <svg width="24" height="24" viewBox="0 0 24 24" fill="none"><ellipse cx="12" cy="8" rx="11" ry="6" transform="rotate(-14 12 8)" stroke="#e8575a" strokeWidth="1.500" /><path d="M2 13q-3 7 9 5" stroke="#ecaaaa" /><path d="M12 3l5 14M6 9l13 8" stroke="#667480" strokeWidth="1.500" /><circle cx="15" cy="20" r="2.500" stroke="#2b8fd0" strokeWidth="2" /><circle cx="20" cy="16" r="2.500" stroke="#2b8fd0" strokeWidth="2" /></svg>
    </TaskButton>
    <TaskButton $gap={1} aria-label="Microsoft Store">
      <svg width="24" height="24" viewBox="0 0 24 24"><path d="M7 6V2h10v4" fill="none" stroke="#25b5ee" strokeWidth="2" /><path d="M1 5h22v16q0 2-2 2H3q-2 0-2-2z" fill="#145a9c" /><path d="M7 9h4v4H7z" fill="#f25022" /><path d="M12.500 9h4v4h-4z" fill="#7fba00" /><path d="M7 14.500h4v4H7z" fill="#00a4ef" /><path d="M12.500 14.500h4v4h-4z" fill="#ffb900" /></svg>
    </TaskButton>
    <TaskButton $gap={1} aria-label="Zoom">
      <svg width="24" height="24" viewBox="0 0 24 24"><rect x="1" y="1" width="22" height="22" rx="6" fill="#4087fc" /><path d="M5 8h8q2 0 2 2v6H7q-2 0-2-2zM16 11l4-3v8l-4-3z" fill="#fff" /></svg>
    </TaskButton>
    <TaskButton $bar="multi" $gap={1} aria-label="Sticky Notes">
      <svg width="22" height="22" viewBox="0 0 22 22"><path d="M0 0h22v11l-11 11H0z" fill="#3b3b3b" /><path d="M11 11h11v1L12 22h-1z" fill="#ffdd00" /><path d="M22 12v10H12z" fill="#333" /></svg>
    </TaskButton>
    <TaskButton $gap={1} aria-label="Recorder">
      <svg width="24" height="24" viewBox="0 0 24 24"><circle cx="12" cy="12.500" r="11" fill="#8a8a8a" /><circle cx="12" cy="11.500" r="11" fill="#fff" /><circle cx="12" cy="11.500" r="8.500" fill="none" stroke="#c43a18" strokeWidth="2" /><circle cx="12" cy="11.500" r="5" fill="#cf3508" /></svg>
    </TaskButton>
    <TaskButton $bar="full" $gap={1} aria-label="Spring Tool Suite">
      <svg width="24" height="24" viewBox="0 0 24 24"><circle cx="12" cy="12" r="11.500" fill="#68b042" /><path d="M4 17C2 6 15 11 21 3c4 12-4 20-14 15 7 0 11-4 12-8-4 6-9 5-15 7z" fill="#fff" /></svg>
    </TaskButton>
    <TaskButton $bar="full" $gap={1} aria-label="Photos">
      <svg width="22" height="22" viewBox="0 0 22 22"><path d="M0 0h22v22H0z" fill="#29a5ea" /><path d="M22 14l-6-6-6 7 8 7h4z" fill="#4c68c8" /><path d="M0 12l6-6 15 16H0z" fill="#10427f" /><circle cx="15" cy="5" r="2" fill="#fff" /></svg>
    </TaskButton>
    <TaskButton $bar="full" $active $gap={1} aria-label="VLC media player"><Cone size={24} /></TaskButton>
    <Tray>
      <TrayButton $w={24} aria-label="Show hidden icons"><svg width="12" height="7" fill="none" stroke="#222" strokeWidth="1.500"><path d="M.5 6.500L6 1l5.500 5.500" /></svg></TrayButton>
      <TrayButton $w={24} aria-label="Security"><svg width="16" height="16"><path d="M0 0h16v16H0z" fill="#1d67bd" /><path d="M8 3v10M3 8h10" stroke="#fff" strokeWidth="2" /></svg></TrayButton>
      <TrayButton $w={28} aria-label="Network"><svg width="13" height="13" viewBox="0 0 13 13" fill="none" stroke="#777"><path d="M1 12Q1 2 12 1M4 12q0-7 8-8" /><path d="M7 12q0-4 5-5" stroke="#222" /><circle cx="11" cy="11" r="1.500" fill="#111" stroke="none" /></svg></TrayButton>
      <TrayButton $w={28}>ENG<br />IN</TrayButton>
      <TrayButton $w={76}>20:51<br />05-07-2022</TrayButton>
      <TrayButton $w={46} aria-label="3 notifications">
        <svg width="26" height="26" viewBox="0 0 26 26"><path d="M0 2h17v12H7l-4 4v-4H0z" fill="#111" /><path d="M3 5h11M3 8h11M3 11h6" stroke="#dce8ee" /><circle cx="16" cy="17" r="8" fill="#ccd6dc" stroke="#8a949a" /><text x="16" y="21" fontSize="11" textAnchor="middle" fill="#111">3</text></svg>
      </TrayButton>
      <TrayEdge />
    </Tray>
  </Taskbar>
);

const menu: [string, string, string][] = [
  ["", "M", "edia"], ["P", "l", "ayback"], ["", "A", "udio"], ["", "V", "ideo"],
  ["Subti", "t", "le"], ["Tool", "s", ""], ["V", "i", "ew"], ["", "H", "elp"],
];

export default function App() {
  return (
    <Desktop>
      <GlobalStyle />
      <TitleBar>
        <Cone size={15} />
        <WindowTitle>{"4 Y2Mate.is - String Handling Session-4  by Mr. Hari Krishna-0i20RQffCmE-720p-1653826283685.mp4 - VLC media player"}</WindowTitle>
        <WindowButton $w={46} aria-label="Minimize"><WinGlyph kind="min" /></WindowButton>
        <WindowButton $w={45} aria-label="Restore"><WinGlyph kind="max" /></WindowButton>
        <WindowButton $w={48} aria-label="Close"><WinGlyph kind="close" /></WindowButton>
      </TitleBar>
      <MenuBar>
        {menu.map(([a, b, c]) => <MenuButton key={a + b + c}>{a}<u>{b}</u>{c}</MenuButton>)}
      </MenuBar>
      <VideoArea>
        <i />
        <PaintWindow />
      </VideoArea>
      <Player />
      <Bottom />
    </Desktop>
  );
}
